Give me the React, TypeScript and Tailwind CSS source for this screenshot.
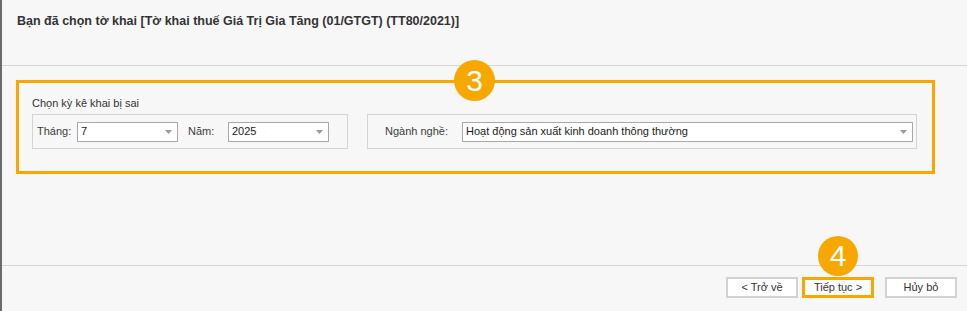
import React from "react";

function Arrow() {
  return (
    <svg width="7" height="4" viewBox="0 0 7 4" className="shrink-0">
      <path d="M0 0 H7 L3.5 4 Z" fill="#999999" />
    </svg>
  );
}

function Combo({ value, w }: { value: string; w: string }) {
  return (
    <div
      className={`${w} h-[20px] bg-white border border-[#a8a8a8] flex items-center pl-[3px] pr-[5px] justify-between`}
    >
      <span className="text-[11px] text-[#1a1a1a] leading-none whitespace-nowrap">{value}</span>
      <Arrow />
    </div>
  );
}

function Btn({ label, active }: { label: string; active?: boolean }) {
  return (
    <div
      className={`w-[72px] h-[21px] bg-white flex items-center justify-center text-[11px] text-[#333] ${
        active ? "border-[3px] border-[#f7a800]" : "border-2 border-[#d2d2d2]"
      }`}
    >
      {label}
    </div>
  );
}

export default function App() {
  return (
    <div className="relative w-[967px] h-[311px] bg-[#f7f7f7] border-l-2 border-[#6b6b6b] flex flex-col font-['Liberation_Sans',Arial,sans-serif] text-[#333] overflow-hidden">
      <div className="h-[66px] shrink-0 border-b border-[#d6d6d6] pl-[15px] pt-[14px]">
        <div className="text-[12.5px] font-bold leading-[15px] text-[#333] whitespace-nowrap">
          Bạn đã chọn tờ khai [Tờ khai thuế Giá Trị Gia Tăng (01/GTGT) (TT80/2021)]
        </div>
      </div>

      <div className="flex-1 pt-[14px] pl-[14px]">
        <div className="w-[919px] h-[94px] border-[3px] border-[#f7a800] pl-[13px] pt-[13px]">
          <div className="text-[11px] leading-[14px] text-[#333]">Chọn kỳ kê khai bị sai</div>
          <div className="flex gap-[19px] mt-[4px]">
            <div className="w-[316px] h-[35px] border border-[#d4d4d4] flex items-center pl-[4px]">
              <span className="w-[40px] text-[11px] text-[#3c3c3c]">Tháng:</span>
              <Combo value="7" w="w-[101px]" />
              <span className="w-[40px] ml-[10px] text-[11px] text-[#3c3c3c]">Năm:</span>
              <Combo value="2025" w="w-[101px]" />
            </div>
            <div className="w-[550px] h-[35px] border border-[#d4d4d4] flex items-center pl-[17px]">
              <span className="w-[77px] text-[11px] text-[#3c3c3c]">Ngành nghề:</span>
              <Combo value="Hoạt động sản xuất kinh doanh thông thường" w="w-[451px]" />
            </div>
          </div>
        </div>
      </div>

      <div className="h-[46px] shrink-0 border-t border-[#d6d6d6] flex justify-end items-start pt-[11px] pr-[10px]">
        <Btn label="< Trở về" />
        <div className="w-[4px]" />
        <Btn label="Tiếp tục >" active />
        <div className="w-[11px]" />
        <Btn label="Hủy bỏ" />
      </div>

      <div className="absolute left-[452px] top-[60px] w-[41px] h-[41px] rounded-full bg-[#f7a800] flex items-center justify-center text-white text-[30px] leading-none">
        3
      </div>
      <div className="absolute left-[816px] top-[236px] w-[40px] h-[40px] rounded-full bg-[#f7a800] flex items-center justify-center text-white text-[30px] leading-none">
        4
      </div>
    </div>
  );
}
